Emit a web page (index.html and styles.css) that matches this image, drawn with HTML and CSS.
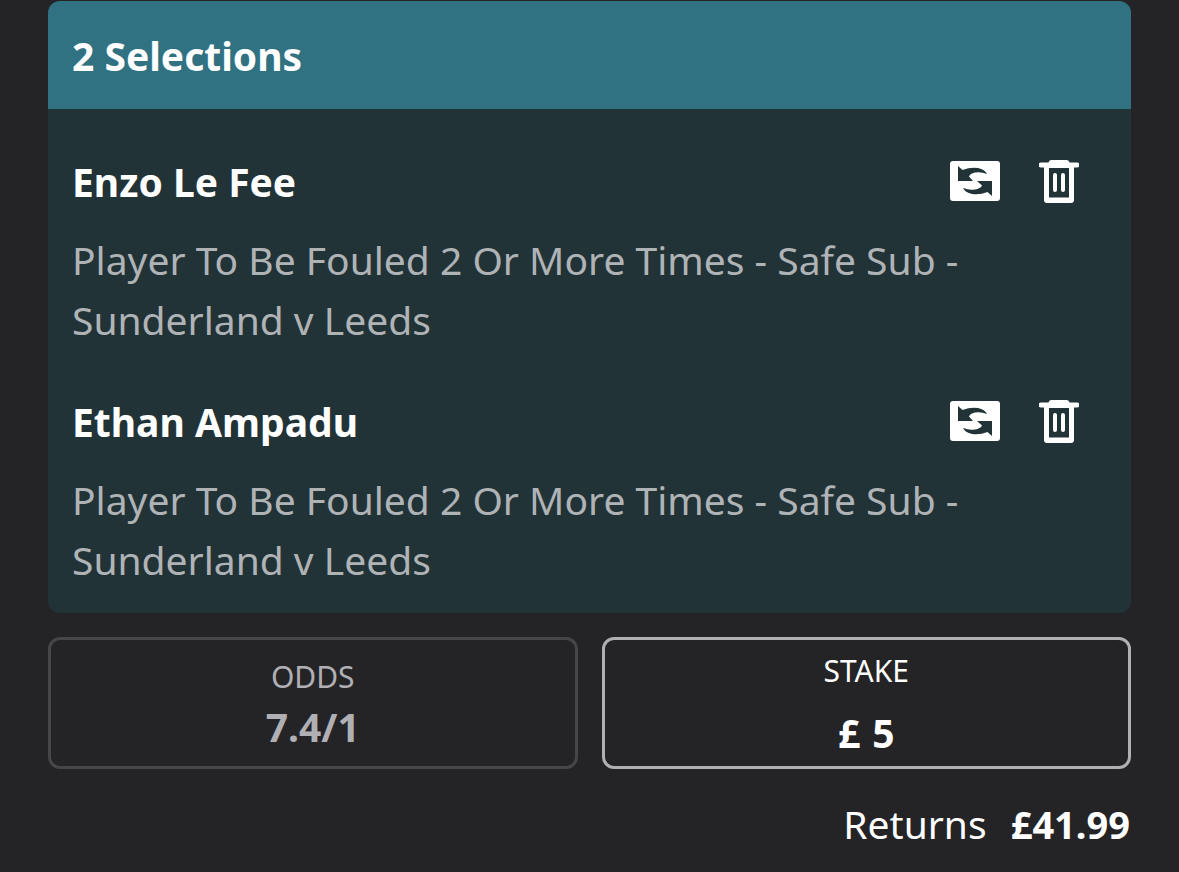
FILE: index.html
```html
<!DOCTYPE html>
<html lang="en">
<head>
<meta charset="utf-8">
<meta name="viewport" content="width=device-width, initial-scale=1">
<title>Bet builder</title>
<link rel="stylesheet" href="styles.css">
</head>
<body>
<svg class="sprite" aria-hidden="true">
  <symbol id="swap" viewBox="0 0 50 40">
    <rect width="50" height="40" rx="3" fill="#fff"/>
    <path fill="#223338" d="M8 5L12.500 9Q20 6 28 7Q35 8.500 37 13Q31 10.500 25 11.500Q20 12.500 19 15.500L23 20H8Z"/>
    <path fill="#223338" d="M42 35L37.500 31Q30 34 22 33Q15 31.500 13 27Q19 29.500 25 28.500Q30.500 27.500 32 24.500L27 20H42Z"/>
  </symbol>
  <symbol id="bin" viewBox="0 0 40 44">
    <path fill="#fff" fill-rule="evenodd" d="M12 1H28Q30 1 30.500 3.500H38A2.500 2.500 0 0 1 38 8.500H35V41Q35 44 32 44H8Q5 44 5 41V8.500H2A2.500 2.500 0 0 1 2 3.500H9.500Q10 1 12 1ZM10 9V38.500H30V9Z"/>
    <path fill="none" stroke="#fff" stroke-width="4" stroke-linecap="round" d="M16 16V31M24 16V31"/>
  </symbol>
</svg>
<main class="slip">
  <section class="card">
    <h1 class="card-title">2 Selections</h1>
    <ul class="selections">
      <li class="selection">
        <div class="selection-head">
          <h2 class="name">Enzo Le Fee</h2>
          <div class="actions">
            <button class="icon-button" type="button" aria-label="Swap Enzo Le Fee"><svg class="icon-swap"><use href="#swap"/></svg></button>
            <button class="icon-button" type="button" aria-label="Remove Enzo Le Fee"><svg class="icon-bin"><use href="#bin"/></svg></button>
          </div>
        </div>
        <p class="detail">Player To Be Fouled 2 Or More Times - Safe Sub - Sunderland v Leeds</p>
      </li>
      <li class="selection">
        <div class="selection-head">
          <h2 class="name">Ethan Ampadu</h2>
          <div class="actions">
            <button class="icon-button" type="button" aria-label="Swap Ethan Ampadu"><svg class="icon-swap"><use href="#swap"/></svg></button>
            <button class="icon-button" type="button" aria-label="Remove Ethan Ampadu"><svg class="icon-bin"><use href="#bin"/></svg></button>
          </div>
        </div>
        <p class="detail">Player To Be Fouled 2 Or More Times - Safe Sub - Sunderland v Leeds</p>
      </li>
    </ul>
  </section>
  <div class="boxes">
    <div class="box odds">
      <span class="box-label">ODDS</span>
      <span class="box-value">7.4/1</span>
    </div>
    <div class="box stake">
      <label class="box-label" for="stake">STAKE</label>
      <div class="box-value amount"><span>£</span><input class="stake-input" id="stake" type="text" inputmode="decimal" value="5"></div>
    </div>
  </div>
  <p class="returns">Returns <strong class="returns-value">£41.99</strong></p>
</main>
</body>
</html>
```
FILE: styles.css
```css
* { box-sizing: border-box; }

body {
  margin: 0;
  background: #242426;
  color: #fff;
  font-family: "Noto Sans", "Open Sans", sans-serif;
  font-size: 39px;
  line-height: 60px;
}

h1, h2, p, ul { margin: 0; padding: 0; font-size: inherit; }

.sprite { display: none; }

.slip { padding: 1px 48px 16px; }

.card {
  overflow: hidden;
  border-radius: 12px;
  background: #223338;
}

.card-title {
  padding: 25px 24px 23px;
  background: #307182;
}

.selections {
  display: flex;
  flex-direction: column;
  gap: 42px;
  padding: 43px 48px 23px 24px;
  list-style: none;
}

.selection-head {
  display: flex;
  justify-content: space-between;
  align-items: center;
  margin-bottom: 18px;
}

.actions {
  display: flex;
  align-items: center;
  gap: 39px;
  padding-right: 4px;
  padding-bottom: 2px;
}

.icon-button {
  display: flex;
  padding: 0;
  border: 0;
  background: none;
  cursor: pointer;
}

.icon-swap { width: 50px; height: 40px; }
.icon-bin { width: 40px; height: 44px; }

.detail { color: #b0b3b6; }

.boxes {
  display: grid;
  grid-template-columns: 1fr 1fr;
  gap: 24px;
  margin-top: 24px;
}

.box {
  display: flex;
  flex-direction: column;
  align-items: center;
  justify-content: center;
  min-height: 132px;
  padding-top: 8px;
  border: 3px solid #464648;
  border-radius: 12px;
}

.box-label { font-size: 30px; line-height: 40px; }

.box-value { font-weight: 700; line-height: 60px; }

.odds { color: #b0b0b4; }

.stake {
  gap: 12px;
  border-color: #b0b0b2;
}

.amount {
  display: flex;
  gap: 12px;
}

.stake-input {
  width: 1ch;
  padding: 0;
  border: 0;
  outline: 0;
  background: none;
  color: inherit;
  font: inherit;
}

.returns {
  display: flex;
  justify-content: flex-end;
  gap: 24px;
  margin-top: 25px;
  padding-right: 1px;
}

.returns-value { font-size: 38px; }
```
